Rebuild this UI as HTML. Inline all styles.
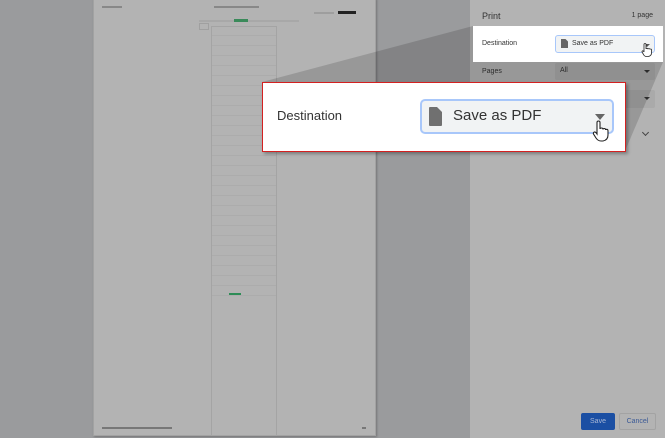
<!DOCTYPE html>
<html><head><meta charset="utf-8"><style>
*{margin:0;padding:0;box-sizing:border-box}
body{width:665px;height:438px;overflow:hidden;background:#9a9b9d;font-family:"Liberation Sans",Arial,sans-serif;position:relative}
.a{position:absolute}
.page{left:93px;top:-2px;width:283px;height:438px;background:#b3b3b3;border:1px solid #a2a2a2;box-shadow:1px 1px 2px rgba(0,0,0,.25)}
.ln{position:absolute;height:2px;background:#9e9e9e}
.panel{left:470px;top:0;width:195px;height:438px;background:#b3b3b3}
.t{font-size:7px;color:#333}
</style></head><body>
<div class="a page">
  <div class="ln" style="left:8px;top:7px;width:20px;background:#888"></div>
  <div class="ln" style="left:120px;top:7px;width:45px;background:#888"></div>
  <div class="ln" style="left:220px;top:13px;width:20px"></div>
  <div class="a" style="left:244px;top:12px;width:18px;height:3px;background:#222"></div>
  <div class="ln" style="left:105px;top:21px;width:100px;background:#a8a8a8"></div>
  <div class="a" style="left:140px;top:20px;width:14px;height:3px;background:#3a8a5a"></div>
  <div class="a" style="left:117px;top:27px;width:66px;height:410px;border:1px solid #a4a4a4;background:repeating-linear-gradient(#b3b3b3 0 8px,#acacac 8px 9px,#b3b3b3 9px 10px)"></div>
  <div class="a" style="left:117px;top:305px;width:66px;height:132px;background:#b3b3b3;border:1px solid #a4a4a4;border-top:none"></div>
  <div class="a" style="left:135px;top:294px;width:12px;height:2px;background:#2d8c56"></div>
  <div class="a" style="left:105px;top:24px;width:10px;height:7px;border:1px solid #a0a0a0"></div>
  <div class="ln" style="left:8px;top:428px;width:70px;background:#777"></div>
  <div class="ln" style="left:268px;top:428px;width:4px;background:#777"></div>
</div>
<div class="a panel">
  <div class="a" style="left:12px;top:11px;font-size:9px;color:#333">Print</div>
  <div class="a" style="right:12px;top:12px;font-size:7px;color:#333">1 page</div>
  <div class="a t" style="left:12px;top:68px">Pages</div>
  <div class="a" style="left:85px;top:63px;width:100px;height:17px;background:#aaa;border-radius:2px"></div>
  <div class="a t" style="left:90px;top:67px">All</div>
  <div class="a" style="left:174px;top:70px;border:3px solid transparent;border-top-color:#333"></div>
  <div class="a" style="left:85px;top:90px;width:100px;height:18px;background:#aaa;border-radius:2px"></div>
  <div class="a" style="left:174px;top:97px;border:3px solid transparent;border-top-color:#333"></div>
  <div class="a" style="left:173px;top:130px;width:5px;height:5px;border-right:1px solid #444;border-bottom:1px solid #444;transform:rotate(45deg)"></div>
  <div class="a" style="left:111px;top:413px;width:34px;height:17px;background:#1b4fa3;border-radius:2px;color:#a9b8d6;font-size:7px;text-align:center;line-height:17px">Save</div>
  <div class="a" style="left:149px;top:413px;width:37px;height:17px;border:1px solid #a3a3a3;border-radius:2px;color:#3b5a96;font-size:7px;text-align:center;line-height:15px">Cancel</div>
</div>
<svg class="a" style="left:0;top:0" width="665" height="438"><polygon points="262,82 473,26 663,26 663,62 625,151 262,151" fill="rgba(0,0,0,0.15)"/></svg>
<div class="a" style="left:473px;top:26px;width:190px;height:36px;background:#fff">
  <div class="a t" style="left:9px;top:14px">Destination</div>
  <div class="a" style="left:82px;top:9px;width:100px;height:18px;border:1px solid #a8c7fa;background:#f1f3f4;border-radius:3px"></div>
  <svg class="a" style="left:88px;top:13px" width="7" height="9"><path d="M0 0H4.5L7 2.5V9H0Z" fill="#666"/></svg>
  <div class="a t" style="left:99px;top:14px">Save as PDF</div>
  <div class="a" style="left:171px;top:18px;border:3px solid transparent;border-top-color:#555"></div>
</div>
<div class="a" style="left:262px;top:82px;width:364px;height:70px;background:#fff;border:1px solid #d42020;box-shadow:2px 2px 3px rgba(0,0,0,.3)">
  <div class="a" style="left:14px;top:25px;font-size:13px;color:#333">Destination</div>
  <div class="a" style="left:157px;top:16px;width:194px;height:35px;border:2px solid #a8c7fa;background:#f1f3f4;border-radius:5px"></div>
  <svg class="a" style="left:166px;top:24px" width="13" height="19"><path d="M0 1Q0 0 1 0H8L13 5V18Q13 19 12 19H1Q0 19 0 18Z" fill="#707070"/></svg>
  <div class="a" style="left:190px;top:24px;font-size:15px;color:#333">Save as PDF</div>
  <div class="a" style="left:332px;top:31px;border:5px solid transparent;border-top:6px solid #666"></div>
  <svg class="a" style="left:329px;top:37px" width="18" height="22"><path d="M5 12V2.5Q5 1 6.5 1Q8 1 8 2.5V9Q8 8 9.5 8Q11 8 11 9.5Q11 8.5 12.3 8.5Q13.6 8.5 13.6 10Q13.6 9.3 14.8 9.3Q16 9.3 16 11V15Q16 20 11 21H9Q6 21 4 18L1.5 14Q1 12.5 2.5 12Q3.5 11.8 5 14Z" fill="#fff" stroke="#222" stroke-width="1.1"/></svg>
</div>
<svg class="a" style="left:641px;top:43px" width="11" height="14"><path d="M3 8V1.5Q3 0.5 4 0.5Q5 0.5 5 1.5V6Q5 5.3 6 5.3Q7 5.3 7 6.3Q7 5.6 8 5.6Q9 5.6 9 6.5Q9 6 9.8 6Q10.5 6 10.5 7V10Q10.5 13 7 13.5H5.5Q3.5 13.5 2.5 11.5L1 9Q0.8 8 1.8 7.8Q2.5 7.8 3 9Z" fill="#fff" stroke="#222" stroke-width=".8"/></svg>
</body></html>
